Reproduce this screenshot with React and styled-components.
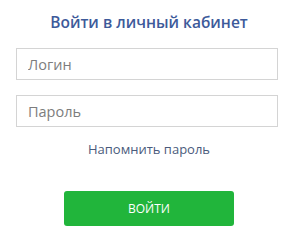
import React from "react";
import styled, { createGlobalStyle } from "styled-components";

const GlobalStyle = createGlobalStyle`
  html, body {
    margin: 0;
    padding: 0;
    background: #ffffff;
  }
  body {
    font-family: "Open Sans", "Liberation Sans", sans-serif;
  }
`;

const Wrapper = styled.div`
  width: 298px;
  height: 238px;
  box-sizing: border-box;
  padding: 11px 20px 0 16px;
  display: flex;
  flex-direction: column;
  align-items: stretch;
`;

const Title = styled.h1`
  margin: 0;
  font-size: 15.5px;
  font-weight: 600;
  line-height: 22px;
  color: #3d5a9a;
  text-align: center;
  padding-left: 4px;
`;

const Field = styled.input`
  box-sizing: border-box;
  width: 262px;
  height: 32px;
  margin-top: ${(p) => p.$top}px;
  padding: 0 11px;
  border: 1px solid #d4d4d4;
  border-radius: 0;
  font-family: "Open Sans", "Liberation Sans", sans-serif;
  font-size: 14.5px;
  color: #333;
  outline: none;

  &::placeholder {
    color: #7d7d7d;
  }
`;

const Remind = styled.a`
  margin-top: 13px;
  align-self: center;
  padding-left: 4px;
  font-size: 13px;
  line-height: 18px;
  color: #4a5b7c;
  text-decoration: none;
`;

const Submit = styled.button`
  align-self: center;
  margin-top: 33px;
  margin-left: 4px;
  width: 170px;
  height: 35px;
  border: none;
  border-radius: 3px;
  background: #21b53b;
  color: #ffffff;
  font-family: "Open Sans", "Liberation Sans", sans-serif;
  font-size: 12px;
  text-transform: uppercase;
  cursor: pointer;
`;

export default function App() {
  return (
    <>
      <GlobalStyle />
      <Wrapper>
        <Title>Войти в личный кабинет</Title>
        <Field $top={15} placeholder="Логин" />
        <Field $top={15} type="password" placeholder="Пароль" />
        <Remind href="#">Напомнить пароль</Remind>
        <Submit>Войти</Submit>
      </Wrapper>
    </>
  );
}
